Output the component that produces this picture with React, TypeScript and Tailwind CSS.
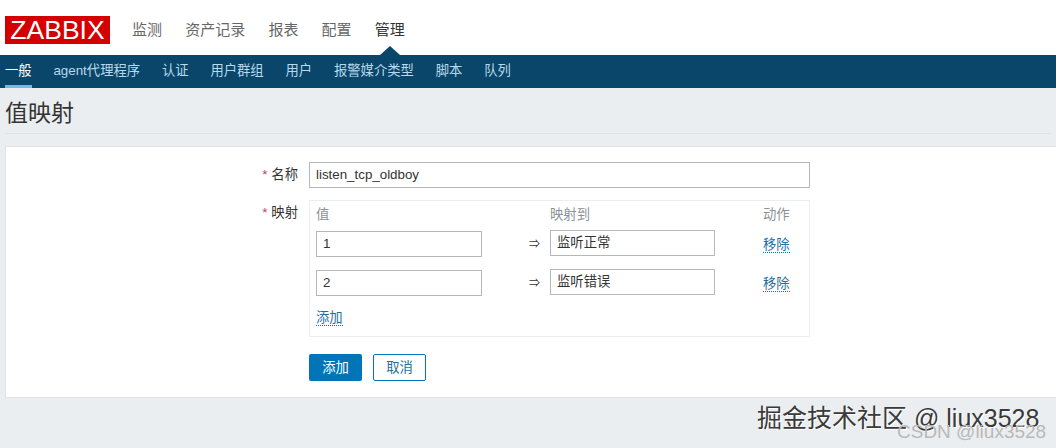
const font = { fontFamily: '"Liberation Sans", "Noto Sans CJK SC", sans-serif' };

const topMenu = ["监测", "资产记录", "报表", "配置", "管理"];
const subMenu = ["一般", "agent代理程序", "认证", "用户群组", "用户", "报警媒介类型", "脚本", "队列"];

const rows = [
  { value: "1", mapped: "监听正常" },
  { value: "2", mapped: "监听错误" },
];

function DottedLink({ children }: { children: string }) {
  return <a className="border-b border-dotted border-[#0275b8] text-[13.33px] leading-[16px] text-[#1f6f9f]">{children}</a>;
}

function TextBox({ value, className }: { value: string; className: string }) {
  return (
    <div className={`flex h-[26px] items-center border border-[#b4b8ba] bg-white px-[6px] text-[13.33px] text-[#333] ${className}`}>
      {value}
    </div>
  );
}

export default function App() {
  return (
    <div style={font} className="relative h-[448px] w-[1056px] overflow-hidden bg-[#ebeef0]">
      <header className="flex h-[55px] items-start bg-white pl-[5px] pt-[16px]">
        <div className="flex h-[28px] w-[105px] items-center justify-center bg-[#d40000] text-[26.5px] leading-none text-white">
          ZABBIX
        </div>
        <nav className="ml-[22px] flex gap-[23.2px] pt-[5px] text-[15px] leading-[18px] text-[#666]">
          {topMenu.map((item) => (
            <span key={item} className={item === "管理" ? "relative text-[#333]" : ""}>
              {item}
              {item === "管理" ? (
                <span className="absolute left-[5px] top-[25px] h-0 w-0 border-x-[10px] border-b-[9px] border-x-transparent border-b-[#0a466a]" />
              ) : null}
            </span>
          ))}
        </nav>
      </header>

      <nav className="flex h-[33px] gap-[21.8px] bg-[#0a466a] pl-[5px] text-[13.33px] text-[#b8d9ec]">
        {subMenu.map((item) => (
          <span
            key={item}
            className={
              item === "一般"
                ? "flex h-[33px] items-center border-b-[3px] border-[#78b8e0] pt-[2px] text-white"
                : "flex h-[33px] items-center pb-[1px]"
            }
          >
            {item}
          </span>
        ))}
      </nav>

      <div className="mx-[5px] h-[46px] border-b border-[#dfe4e7] pt-[10px] text-[23px] leading-[30px] text-[#333]">值映射</div>

      <main className="ml-[5px] mt-[12px] flex h-[252px] border border-r-0 border-[#dfe4e7] bg-white pt-[15px]">
        <div className="flex w-[303px] flex-col items-end pr-[11px] text-[13.33px] leading-[16px] text-[#333]">
          <div className="mt-[5px]"><span className="mr-[4px] text-[#c0436d]">*</span>名称</div>
          <div className="mt-[22px]"><span className="mr-[4px] text-[#c0436d]">*</span>映射</div>
        </div>

        <div className="flex flex-col">
          <TextBox value="listen_tcp_oldboy" className="w-[501px]" />

          <section className="mt-[12px] h-[137px] w-[501px] border border-[#ebeef0] px-[6px]">
            <div className="grid h-[29px] grid-cols-[234px_213px_auto] items-center pb-[1px] text-[13.33px] text-[#8a9296]">
              <span>值</span>
              <span>映射到</span>
              <span>动作</span>
            </div>
            {rows.map((row) => (
              <div key={row.value} className="mb-[13px] grid h-[26px] grid-cols-[166px_68px_165px_48px_auto] items-center">
                <TextBox value={row.value} className="w-[166px]" />
                <span className="pl-[47px] text-[11px] text-[#333]">⇒</span>
                <TextBox value={row.mapped} className="mb-[2px] w-[165px]" />
                <span />
                <span><DottedLink>移除</DottedLink></span>
              </div>
            ))}
            <div className="-mt-[3px]"><DottedLink>添加</DottedLink></div>
          </section>

          <div className="mt-[17px] flex gap-[11px] text-[13.33px]">
            <button className="h-[27px] w-[53px] rounded-[2px] bg-[#0275b8] text-white">添加</button>
            <button className="h-[27px] w-[53px] rounded-[2px] border border-[#0275b8] bg-white text-[#1f6f9f]">取消</button>
          </div>
        </div>
      </main>

      <div className="absolute left-[757px] top-[403px] text-[25px] leading-[30px] text-[#3a3a3a] [text-shadow:1px_1px_0_#fff]">
        掘金技术社区 @ liux3528
      </div>
      <div className="absolute left-[897px] top-[421px] text-[19px] leading-[22px] text-[#b9b9b9]">
        CSDN @liux3528
      </div>
    </div>
  );
}
